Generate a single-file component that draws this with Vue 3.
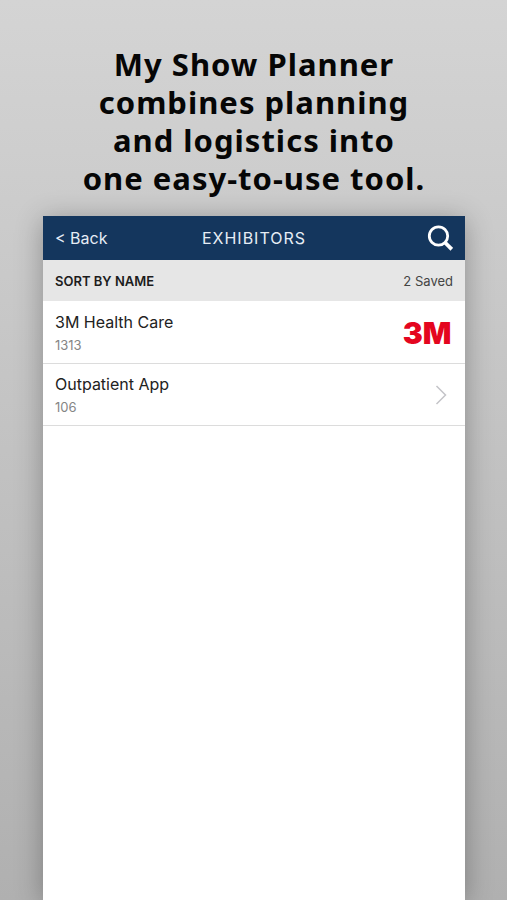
<script setup>
const exhibitors = [
  { name: '3M Health Care', booth: '1313', logo: true },
  { name: 'Outpatient App', booth: '106', logo: false },
]
</script>

<template>
  <main class="page">
    <h1 class="headline">
      My Show Planner<br />combines planning<br />and logistics into<br />one easy-to-use tool.
    </h1>
    <section class="screen">
      <header class="bar">
        <a class="back" href="#">&lt; Back</a>
        <h2 class="title">EXHIBITORS</h2>
        <button class="search" type="button" aria-label="Search">
          <svg width="26" height="26" viewBox="0 0 26 26" fill="none" stroke="#fff">
            <circle cx="11.500" cy="11" r="9.200" stroke-width="2.800" />
            <path d="M18 17.500L24.800 24.300" stroke-width="3.800" />
          </svg>
        </button>
      </header>
      <div class="sort">
        <button class="sort-by" type="button">SORT BY NAME</button>
        <span class="saved">2 Saved</span>
      </div>
      <ul class="list">
        <li v-for="item in exhibitors" :key="item.booth">
          <a class="row" href="#">
            <span class="info">
              <span class="name">{{ item.name }}</span>
              <span class="booth">{{ item.booth }}</span>
            </span>
            <svg v-if="item.logo" class="logo" width="48" height="40" viewBox="0 0 48 40" aria-hidden="true">
              <text x="24" y="31" text-anchor="middle">3M</text>
            </svg>
            <svg v-else class="chevron" width="12" height="20" viewBox="0 0 12 20" fill="none" stroke="#c4c4c8" stroke-width="1.500" aria-hidden="true">
              <path d="M1.500 1L10.500 10L1.500 19" />
            </svg>
          </a>
        </li>
      </ul>
    </section>
  </main>
</template>

<style>
body {
  margin: 0;
}
</style>

<style scoped>
.page {
  box-sizing: border-box;
  min-height: 100vh;
  display: flex;
  flex-direction: column;
  padding: 45px 42px 0 43px;
  overflow: hidden;
  background: linear-gradient(#d4d4d4, #b0b0b0);
  font-family: Inter, "Liberation Sans", sans-serif;
}
.headline {
  margin: 0 0 19px;
  font-family: "Noto Sans", "Open Sans", sans-serif;
  font-size: 31px;
  font-weight: 700;
  line-height: 38px;
  letter-spacing: 1px;
  text-align: center;
  white-space: nowrap;
  color: #060606;
}
.screen {
  flex: 1;
  background: #fff;
  box-shadow: 0 4px 26px rgba(0, 0, 0, 0.3);
}
.bar {
  display: grid;
  grid-template-columns: 1fr auto 1fr;
  align-items: center;
  height: 44px;
  padding: 0 12px;
  background: #14365d;
  color: #e6edf5;
}
.back {
  font-size: 16px;
  line-height: 20px;
  color: inherit;
  text-decoration: none;
}
.title {
  margin: 0;
  font-size: 16px;
  line-height: 20px;
  font-weight: 400;
  letter-spacing: 1px;
}
.search {
  justify-self: end;
  display: flex;
  padding: 0;
  border: 0;
  background: none;
}
.sort {
  display: flex;
  align-items: center;
  justify-content: space-between;
  height: 41px;
  padding: 0 12px;
  background: #e6e6e6;
}
.sort-by {
  padding: 0;
  border: 0;
  background: none;
  font-family: inherit;
  font-size: 13px;
  font-weight: 600;
  color: #1c1c1c;
}
.saved {
  font-size: 13px;
  color: #444;
}
.list {
  margin: 0;
  padding: 1px 0 0;
  list-style: none;
}
.row {
  display: flex;
  align-items: center;
  justify-content: space-between;
  height: 61px;
  padding: 0 14px 0 12px;
  border-bottom: 1px solid #dcdcdc;
  color: #222;
  text-decoration: none;
}
.info {
  display: flex;
  flex-direction: column;
  gap: 2px;
}
.name {
  font-size: 16px;
  line-height: 22px;
}
.booth {
  font-size: 13px;
  line-height: 20px;
  color: #858585;
}
.logo text {
  font-family: Inter, "Liberation Sans", sans-serif;
  font-size: 30px;
  font-weight: 900;
  fill: #e4061f;
}
.chevron {
  margin-right: 4px;
}
</style>
